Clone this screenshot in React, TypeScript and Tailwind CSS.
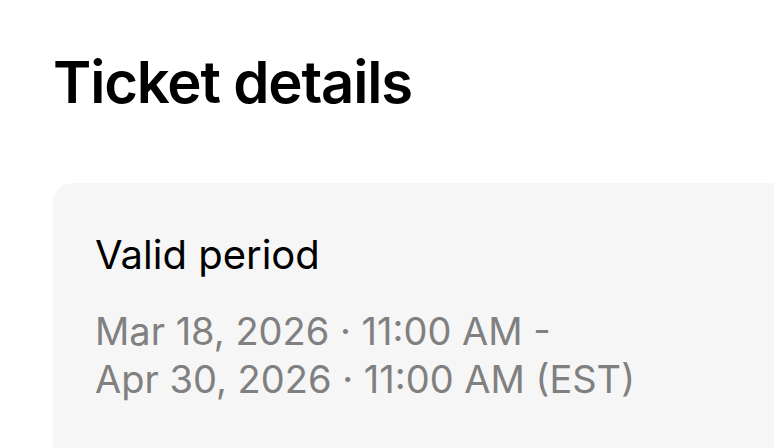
export default function App() {
  return (
    <div className="h-screen overflow-hidden bg-white pl-[53px] pt-[47px] font-['Inter',sans-serif]">
      <h1 className="text-[58px] font-semibold leading-[70px] tracking-[-0.02em] text-black">Ticket details</h1>
      <div className="mt-[66px] h-[400px] w-[800px] rounded-l-[20px] bg-[#f6f6f6] pl-[42px] pt-[48px]">
        <h2 className="text-[40px] leading-[48px] text-black">Valid period</h2>
        <p className="mt-[28px] text-[38px] leading-[48px] text-[#808080]">
          Mar 18, 2026 · 11:00 AM -
          <br />
          Apr 30, 2026 · 11:00 AM (EST)
        </p>
      </div>
    </div>
  );
}
